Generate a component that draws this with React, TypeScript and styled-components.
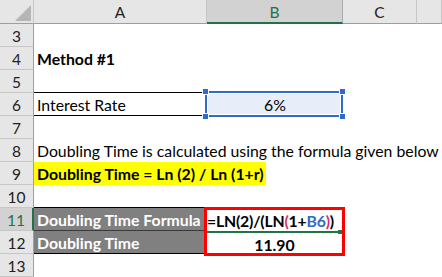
import React from 'react'
import styled, { createGlobalStyle } from 'styled-components'

const GlobalStyle = createGlobalStyle`
  html, body {
    margin: 0;
    padding: 0;
    background: #fff;
  }
  body {
    font-family: Lato, 'Liberation Sans', sans-serif;
  }
`

const HEADER_BG = '#e6e6e6'
const HEADER_LINE = '#c6c6c6'
const HEADER_EDGE = '#9e9e9e'
const ACTIVE_GREEN = '#217346'

const Sheet = styled.div`
  display: grid;
  grid-template-columns: 34px 173px 136px 74px 1fr;
  grid-template-rows: 24px;
  grid-auto-rows: 23px;
  width: 442px;
  height: 277px;
  overflow: hidden;
  font-size: 15.8px;
  color: #000;
`

const Corner = styled.div`
  grid-column: 1;
  position: relative;
  background: ${HEADER_BG};
  border-right: 1px solid ${HEADER_LINE};
  border-bottom: 1px solid ${HEADER_EDGE};
`

const CornerMark = styled.div`
  position: absolute;
  right: 2px;
  bottom: 2px;
  width: 0;
  height: 0;
  border-left: 16px solid transparent;
  border-bottom: 16px solid #b5b5b5;
`

const ColHeader = styled.div<{ $active?: boolean }>`
  box-sizing: border-box;
  display: flex;
  align-items: center;
  justify-content: center;
  font-size: 15.5px;
  background: ${({ $active }) => ($active ? '#d2d2d2' : HEADER_BG)};
  color: ${({ $active }) => ($active ? ACTIVE_GREEN : '#222')};
  border-right: 1px solid ${({ $active }) => ($active ? '#ababab' : HEADER_LINE)};
  border-bottom: ${({ $active }) => ($active ? `2px solid ${ACTIVE_GREEN}` : `1px solid ${HEADER_EDGE}`)};
  padding-top: 1px;
`

const RowHeader = styled.div<{ $active?: boolean }>`
  grid-column: 1;
  box-sizing: border-box;
  display: flex;
  align-items: center;
  justify-content: center;
  font-size: 15.5px;
  background: ${({ $active }) => ($active ? '#d2d2d2' : HEADER_BG)};
  color: ${({ $active }) => ($active ? ACTIVE_GREEN : '#222')};
  border-bottom: 1px solid ${HEADER_LINE};
  border-right: ${({ $active }) => ($active ? `2px solid ${ACTIVE_GREEN}` : `1px solid ${HEADER_EDGE}`)};
  padding-top: 1px;
`

const Cell = styled.div<{
  $col?: number
  $span?: number
  $bold?: boolean
  $align?: 'left' | 'center'
}>`
  grid-column: ${({ $col = 2, $span = 1 }) => `${$col} / span ${$span}`};
  box-sizing: border-box;
  padding: 1px 3px 0;
  line-height: 22px;
  white-space: nowrap;
  overflow: visible;
  font-weight: ${({ $bold }) => ($bold ? 700 : 400)};
  text-align: ${({ $align = 'left' }) => $align};
`

const RuledCell = styled(Cell)`
  border-bottom: 1px solid #000;
  box-shadow: 0 -1px 0 #000;
`

const Highlight = styled.span`
  display: inline-block;
  width: 232px;
  height: 23px;
  margin: -2px 0 0 -3px;
  padding: 1px 3px 0;
  box-sizing: border-box;
  background: #ffff00;
  font-weight: 700;
`

const SelectedCell = styled(Cell)`
  position: relative;
  background: #e8eef9;
  &::before {
    content: '';
    position: absolute;
    left: -2px;
    top: -2px;
    right: 0;
    bottom: -1px;
    border: 2px solid #3169cc;
    box-shadow: inset 0 0 0 1px #fff;
    pointer-events: none;
  }
`

const Handle = styled.span<{ $x: 'left' | 'right'; $y: 'top' | 'bottom' }>`
  position: absolute;
  width: 5px;
  height: 5px;
  background: #3169cc;
  box-shadow: 0 0 0 1px #fff;
  ${({ $x }) => ($x === 'left' ? 'left: -4px;' : 'right: -2px;')}
  ${({ $y }) => ($y === 'top' ? 'top: -4px;' : 'bottom: -3px;')}
  z-index: 2;
`

const GrayCell = styled(Cell)<{ $top?: boolean }>`
  background: #808080;
  color: #fff;
  font-weight: 700;
  border-bottom: 1px solid ${({ $top }) => ($top ? '#3a3a3a' : '#000')};
  box-shadow: ${({ $top }) => ($top ? '0 -1px 0 #000' : 'none')};
`

const RedBox = styled.div`
  grid-column: 3;
  grid-row: span 2;
  margin: -1px -2px -2px -3px;
  border: 3px solid #ff0000;
  display: grid;
  grid-template-rows: 23px 1fr;
  font-weight: 700;
  position: relative;
  z-index: 1;
`

const FormulaLine = styled.div`
  position: relative;
  line-height: 22px;
  border-bottom: 2px solid ${ACTIVE_GREEN};
  margin-right: 2px;
  white-space: nowrap;
  letter-spacing: -0.2px;
  &::after {
    content: '';
    position: absolute;
    right: -2px;
    bottom: -3px;
    width: 4px;
    height: 4px;
    background: ${ACTIVE_GREEN};
  }
`

const ValueLine = styled.div`
  line-height: 22px;
  text-align: center;
  padding-top: 1px;
`

const Paren = styled.span`
  color: #d4306a;
`

const Ref = styled.span`
  color: #3169cc;
`

export default function App() {
  return (
    <>
      <GlobalStyle />
      <Sheet>
        <Corner>
          <CornerMark />
        </Corner>
        <ColHeader>A</ColHeader>
        <ColHeader $active>B</ColHeader>
        <ColHeader>C</ColHeader>
        <ColHeader />

        <RowHeader>3</RowHeader>

        <RowHeader>4</RowHeader>
        <Cell $span={4} $bold>Method #1</Cell>

        <RowHeader>5</RowHeader>

        <RowHeader>6</RowHeader>
        <RuledCell>Interest Rate</RuledCell>
        <SelectedCell $col={3} $align="center">
          6%
          <Handle $x="left" $y="top" />
          <Handle $x="right" $y="top" />
          <Handle $x="left" $y="bottom" />
          <Handle $x="right" $y="bottom" />
        </SelectedCell>

        <RowHeader>7</RowHeader>

        <RowHeader>8</RowHeader>
        <Cell $span={4}>Doubling Time is calculated using the formula given below</Cell>

        <RowHeader>9</RowHeader>
        <Cell $span={4}>
          <Highlight>Doubling Time = Ln (2) / Ln (1+r)</Highlight>
        </Cell>

        <RowHeader>10</RowHeader>

        <RowHeader $active>11</RowHeader>
        <GrayCell $top>Doubling Time Formula</GrayCell>
        <RedBox>
          <FormulaLine>
            =LN(2)/(LN<Paren>(</Paren>1+<Ref>B6</Ref><Paren>)</Paren>)
          </FormulaLine>
          <ValueLine>11.90</ValueLine>
        </RedBox>

        <RowHeader>12</RowHeader>
        <GrayCell>Doubling Time</GrayCell>

        <RowHeader>13</RowHeader>
      </Sheet>
    </>
  )
}
